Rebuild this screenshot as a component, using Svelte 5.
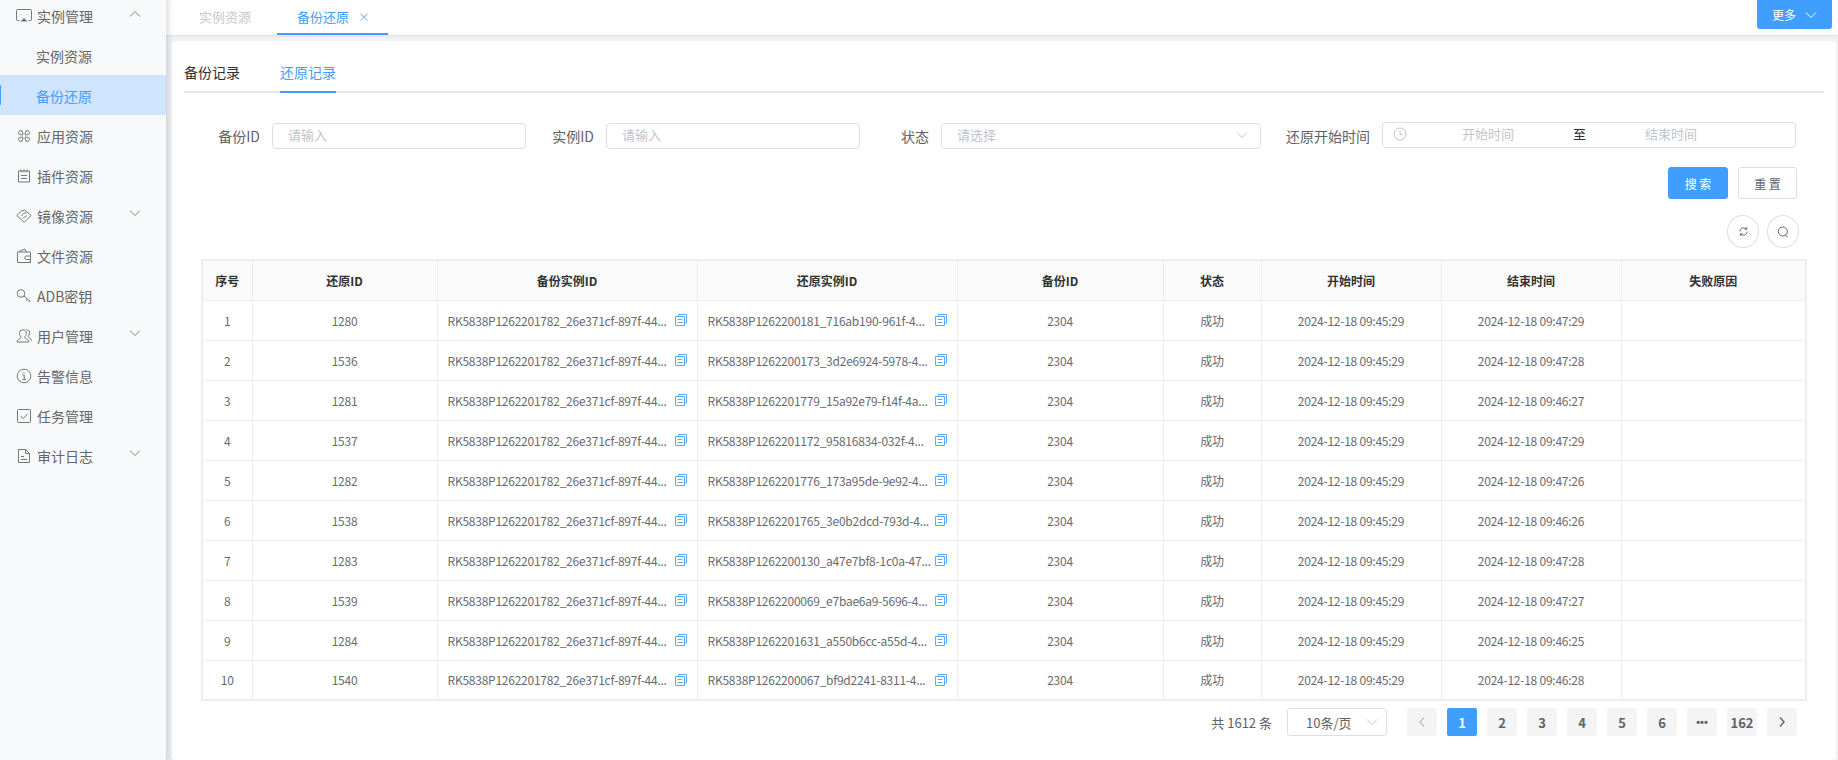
<script lang="ts">
  const menu = [
    { label: '实例管理', icon: 'screen', arrow: 'up' },
    { label: '实例资源', sub: true },
    { label: '备份还原', sub: true, active: true },
    { label: '应用资源', icon: 'apps' },
    { label: '插件资源', icon: 'plugin' },
    { label: '镜像资源', icon: 'tag', arrow: 'down' },
    { label: '文件资源', icon: 'wallet' },
    { label: 'ADB密钥', icon: 'key' },
    { label: '用户管理', icon: 'user', arrow: 'down' },
    { label: '告警信息', icon: 'info' },
    { label: '任务管理', icon: 'check' },
    { label: '审计日志', icon: 'doc', arrow: 'down' }
  ];

  const columns = ['序号', '还原ID', '备份实例ID', '还原实例ID', '备份ID', '状态', '开始时间', '结束时间', '失败原因'];

  const source = 'RK5838P1262201782_26e371cf-897f-44...';
  const rows = [
    ['1280', 'RK5838P1262200181_716ab190-961f-4...', '09:47:29'],
    ['1536', 'RK5838P1262200173_3d2e6924-5978-4...', '09:47:28'],
    ['1281', 'RK5838P1262201779_15a92e79-f14f-4a...', '09:46:27'],
    ['1537', 'RK5838P1262201172_95816834-032f-4...', '09:47:29'],
    ['1282', 'RK5838P1262201776_173a95de-9e92-4...', '09:47:26'],
    ['1538', 'RK5838P1262201765_3e0b2dcd-793d-4...', '09:46:26'],
    ['1283', 'RK5838P1262200130_a47e7bf8-1c0a-47...', '09:47:28'],
    ['1539', 'RK5838P1262200069_e7bae6a9-5696-4...', '09:47:27'],
    ['1284', 'RK5838P1262201631_a550b6cc-a55d-4...', '09:46:25'],
    ['1540', 'RK5838P1262200067_bf9d2241-8311-4...', '09:46:28']
  ];

  const pages = ['1', '2', '3', '4', '5', '6', '•••', '162'];
</script>

{#snippet chevron(dir: string)}
  <svg class="chev" class:up={dir === 'up'} viewBox="0 0 12 8" width="12" height="8" fill="none" stroke="currentColor" stroke-width="1"><path d="M1 1.5l5 5 5-5" /></svg>
{/snippet}

{#snippet menuIcon(name: string)}
  <svg class="micon" viewBox="0 0 16 16" width="16" height="16" fill="none" stroke="currentColor" stroke-width="1">
    {#if name === 'screen'}
      <path d="M3.5 12.500H1.500a1 1 0 0 1-1-1v-9a1 1 0 0 1 1-1h13a1 1 0 0 1 1 1v9a1 1 0 0 1-1 1h-2" />
      <path d="M4.500 13.500l3.500-3.500 3.500 3.500z" fill="currentColor" stroke="none" />
    {:else if name === 'apps'}
      <path d="M6.800 6.800H4.700a2.100 2.100 0 1 1 2.100-2.100zM9.200 6.800V4.700a2.100 2.100 0 1 1 2.100 2.100zM6.800 9.200v2.100a2.100 2.100 0 1 1-2.100-2.100zM9.200 9.200h2.100a2.100 2.100 0 1 1-2.100 2.100z" />
    {:else if name === 'plugin'}
      <path d="M2.500 3h11v11h-11zM5 1.500v3M8 1.500v3M11 1.500v3M5 7.500h6M5 10.500h6" />
    {:else if name === 'tag'}
      <path d="M.8 7.500L5.500 3l3-1 6.700 5.500-7 6.800z" /><path d="M5.500 8c1-2.500 3.500-3.500 5-3M6.500 10c1.500-.5 3-1 4.500-2.500" />
    {:else if name === 'wallet'}
      <path d="M1.500 14.500V5a1.500 1.500 0 0 1 1-1.400L9 1l1.200 3h3.800a.5.500 0 0 1 .5.500v10z" /><path d="M2.500 4h7.700M10.500 8h4v3.500h-4a1.750 1.750 0 0 1 0-3.500z" />
    {:else if name === 'key'}
      <circle cx="5" cy="5.500" r="3.800" /><path d="M8 8l6.500 5.500M11.500 11l-1.500 1.800M13.500 12.600l-1 1.200" />
    {:else if name === 'user'}
      <path d="M6.800 1.800a3.400 3.400 0 0 0-3.400 3.600c0 1.700 1 2.600 1.500 3.400.4 1.500-1 2-2.300 2.700-1 .5-1.600 1.300-1.600 2.500h11.800c0-1.200-.6-2-1.600-2.500-1.300-.7-2.700-1.200-2.300-2.700.5-.8 1.500-1.700 1.500-3.400a3.400 3.400 0 0 0-3.600-3.600z" />
      <path d="M10.300 1.500c2.300.2 3.500 2 3.300 3.900-.2 1.400-1.200 2.200-1.300 3.200 0 1.600 3 1.400 3.200 4" />
    {:else if name === 'info'}
      <circle cx="8" cy="8" r="6.800" /><path d="M6.500 7h1.700v4.500M6.500 11.500h3.500M8 4.200v1.300" />
    {:else if name === 'check'}
      <rect x="1.500" y="1.500" width="13" height="13" rx="1" /><path d="M4.500 8l2.700 2.700 4.300-5" />
    {:else if name === 'doc'}
      <path d="M2.500 1.500h7l4 4v9h-11z" /><path d="M9.500 1.500v4h4M5 8.500h3M5 11.500h6" />
    {/if}
  </svg>
{/snippet}

{#snippet copyIcon()}
  <svg class="copy" viewBox="0 0 12 12" width="12" height="12" fill="none" stroke="currentColor" stroke-width="1"><path d="M3.500 2.500V.5h8v8.500h-2" /><path d="M.5 2.500h9v9h-9z" /><path d="M2.500 5.500h5M2.500 8.500h5" /></svg>
{/snippet}

<div class="layout">
  <aside class="sidebar">
    {#each menu as item}
      <div class="mitem" class:sub={item.sub} class:active={item.active}>
        {#if item.icon}{@render menuIcon(item.icon)}{/if}
        <span>{item.label}</span>
        {#if item.arrow}{@render chevron(item.arrow)}{/if}
      </div>
    {/each}
  </aside>

  <div class="main">
    <header class="topbar">
      <div class="tabs">
        <div class="tab">实例资源</div>
        <div class="tab current">备份还原<span class="close">×</span></div>
      </div>
      <button class="more">更多{@render chevron('down')}</button>
    </header>

    <section class="card">
      <div class="subtabs">
        <div class="subtab">备份记录</div>
        <div class="subtab on">还原记录</div>
      </div>

      <div class="filters">
        <label class="f f1">备份ID<span class="input">请输入</span></label>
        <label class="f f2">实例ID<span class="input">请输入</span></label>
        <label class="f f3">状态<span class="input select">请选择{@render chevron('down')}</span></label>
        <label class="f f4">
          还原开始时间
          <span class="input range">
            <svg viewBox="0 0 14 14" width="14" height="14" fill="none" stroke="currentColor" stroke-width="1"><circle cx="7" cy="7" r="6" /><path d="M7 3.500V7.500h2.500" /></svg>
            <i>开始时间</i><b>至</b><i>结束时间</i>
          </span>
        </label>
      </div>

      <div class="actions">
        <button class="btn primary">搜 索</button>
        <button class="btn">重 置</button>
      </div>

      <div class="tools">
        <button class="round" aria-label="刷新">
          <svg viewBox="0 0 12 12" width="11" height="11" fill="none" stroke="currentColor" stroke-width="1"><path d="M2 6a4 4 0 0 1 7-2.700M10 6a4 4 0 0 1-7 2.700M9.500 1v2.500H7M2.500 11V8.500H5" /></svg>
        </button>
        <button class="round" aria-label="搜索">
          <svg viewBox="0 0 12 12" width="12" height="12" fill="none" stroke="currentColor" stroke-width="1"><circle cx="5.800" cy="5.500" r="4.500" /><path d="M8.500 9l2 2" /></svg>
        </button>
      </div>

      <table>
        <colgroup>
          <col style="width:50px" /><col style="width:185px" /><col style="width:260px" /><col style="width:260px" /><col style="width:206px" /><col style="width:98px" /><col style="width:180px" /><col style="width:180px" /><col style="width:185px" />
        </colgroup>
        <thead>
          <tr>{#each columns as c}<th>{c}</th>{/each}</tr>
        </thead>
        <tbody>
          {#each rows as r, i}
            <tr>
              <td>{i + 1}</td>
              <td>{r[0]}</td>
              <td class="idcell"><div><span>{source}</span>{@render copyIcon()}</div></td>
              <td class="idcell"><div><span>{r[1]}</span>{@render copyIcon()}</div></td>
              <td>2304</td>
              <td>成功</td>
              <td>2024-12-18 09:45:29</td>
              <td>2024-12-18 {r[2]}</td>
              <td></td>
            </tr>
          {/each}
        </tbody>
      </table>

      <div class="pager">
        <span class="total">共 1612 条</span>
        <span class="size">10条/页{@render chevron('down')}</span>
        <div class="pages">
          <span class="pg dim"><svg viewBox="0 0 8 12" width="8" height="12" fill="none" stroke="currentColor" stroke-width="1.400"><path d="M6 1.500L2 6l4 4.500" /></svg></span>
          {#each pages as p}
            <span class="pg" class:cur={p === '1'} class:dots={p === '•••'}>{p}</span>
          {/each}
          <span class="pg"><svg viewBox="0 0 8 12" width="8" height="12" fill="none" stroke="currentColor" stroke-width="1.400"><path d="M2 1.500L6 6l-4 4.500" /></svg></span>
        </div>
      </div>
    </section>
  </div>
</div>

<style>
  :global(body) {
    margin: 0;
    font-family: "Noto Sans CJK SC", "Noto Sans", sans-serif;
    font-size: 14px;
    color: #606266;
  }

  .layout {
    display: flex;
    width: 1838px;
    height: 760px;
    overflow: hidden;
    background: #f0f2f5;
  }

  .sidebar {
    flex: none;
    width: 166px;
    height: 770px;
    margin-top: -5px;
    background: #f8f9fb;
    box-shadow: 2px 0 6px rgb(0 21 41 / 0.16);
    position: relative;
    z-index: 2;
  }

  .mitem {
    position: relative;
    display: flex;
    align-items: center;
    box-sizing: border-box;
    height: 40px;
    padding: 2px 0 0 16px;
    font-size: 14px;
    color: #666;
  }
  .mitem.sub {
    padding-left: 36px;
  }
  .mitem.active {
    background: #cfe5fd;
    color: #409eff;
  }
  .mitem.active::before {
    content: '';
    position: absolute;
    left: -1px;
    top: 10px;
    height: 20px;
    width: 2px;
    border-radius: 2px;
    background: #409eff;
  }
  .micon {
    margin-right: 5px;
    color: #777;
  }
  .mitem .chev {
    position: absolute;
    left: 129px;
    top: 14px;
    color: #888;
  }
  .mitem .chev.up {
    top: 15px;
  }
  .chev.up {
    transform: rotate(180deg);
  }

  .main {
    flex: 1;
    min-width: 0;
  }

  .topbar {
    display: flex;
    justify-content: space-between;
    align-items: flex-start;
    height: 35px;
    background: #fff;
    box-shadow: 0 1px 3px rgb(0 0 0 / 0.08);
    padding: 0 6px 0 0;
  }
  .tabs {
    display: flex;
  }
  .tab {
    display: flex;
    align-items: center;
    box-sizing: border-box;
    width: 111px;
    height: 33px;
    padding-left: 33px;
    font-size: 13px;
    color: #c8c9cc;
  }
  .tab.current {
    padding-left: 20px;
    height: 35px;
    border-bottom: 2px solid #409eff;
    color: #409eff;
  }
  .close {
    margin-left: 9px;
    font-size: 12px;
    color: #7db8f7;
  }
  .more {
    display: flex;
    align-items: center;
    justify-content: center;
    gap: 9px;
    width: 75px;
    height: 29px;
    border: 0;
    border-radius: 0 0 3px 3px;
    background: #409eff;
    color: #fff;
    font: inherit;
    font-size: 12px;
  }

  .card {
    margin: 6px 2px 0 6px;
    height: 719px;
    box-sizing: border-box;
    padding: 0 12px;
    background: #fff;
    border-radius: 4px;
  }

  .subtabs {
    display: flex;
    gap: 40px;
    height: 50px;
    border-bottom: 2px solid #e4e7ed;
  }
  .subtab {
    height: 52px;
    padding-top: 19px;
    box-sizing: border-box;
    line-height: 24px;
    color: #303133;
  }
  .subtab.on {
    color: #409eff;
    border-bottom: 2px solid #409eff;
  }

  .filters {
    display: flex;
    height: 26px;
    margin-top: 30px;
  }
  .f {
    display: flex;
    align-items: center;
    justify-content: flex-end;
    gap: 12px;
    font-size: 14px;
    color: #606266;
    white-space: nowrap;
  }
  .f1 { width: 342px; }
  .f2 { width: 334px; }
  .f3 { width: 401px; }
  .f4 { width: 535px; }
  .input {
    display: flex;
    align-items: center;
    box-sizing: border-box;
    height: 26px;
    padding: 0 0 3px 15px;
    border: 1px solid #dcdfe6;
    border-radius: 4px;
    color: #c0c4cc;
    font-size: 13px;
    background: #fff;
  }
  .f1 .input { width: 254px; }
  .f2 .input { width: 254px; }
  .f3 .input { width: 320px; justify-content: space-between; padding-right: 12px; }
  .f4 .input { width: 414px; padding-left: 10px; margin-top: -2px; }
  .range i {
    width: 162px;
    font-style: normal;
    text-align: center;
  }
  .range b {
    margin: 0 4px;
    font-weight: 400;
    color: #303133;
  }

  .actions {
    display: flex;
    justify-content: flex-end;
    gap: 10px;
    margin-top: 18px;
    padding-right: 27px;
  }
  .btn {
    width: 59px;
    height: 32px;
    border: 1px solid #dcdfe6;
    border-radius: 3px;
    background: #fff;
    color: #606266;
    font: inherit;
    font-size: 12px;
  }
  .btn.primary {
    width: 60px;
    background: #409eff;
    border-color: #409eff;
    color: #fff;
  }

  .tools {
    display: flex;
    justify-content: flex-end;
    gap: 8px;
    margin-top: 16px;
    padding-right: 25px;
  }
  .round {
    display: flex;
    align-items: center;
    justify-content: center;
    width: 32px;
    height: 33px;
    padding: 0;
    border: 1px solid #dcdfe6;
    border-radius: 50%;
    background: #fff;
    color: #606266;
  }

  table {
    width: 1604px;
    margin: 11px 0 0 17px;
    table-layout: fixed;
    border-collapse: collapse;
    border: 2px solid #ebeef5;
    font-size: 12px;
  }
  th,
  td {
    height: 40px;
    padding: 0;
    box-sizing: border-box;
    border: 1px solid #ebeef5;
    text-align: center;
    color: #686a6e;
    font-weight: 400;
  }
  td {
    letter-spacing: -0.24px;
  }
  th {
    background: #fafafa;
    color: #303133;
    font-weight: 700;
  }
  .idcell div {
    display: flex;
    align-items: center;
    justify-content: space-between;
    padding: 0 10px;
    white-space: nowrap;
  }
  .idcell span {
    overflow: hidden;
  }
  .copy {
    flex: none;
    margin-left: 2px;
    color: #5ca8f5;
  }

  .pager {
    display: flex;
    align-items: center;
    justify-content: flex-end;
    height: 28px;
    margin-top: 7px;
    padding-right: 27px;
    font-size: 13px;
  }
  .size {
    display: flex;
    align-items: center;
    justify-content: space-between;
    box-sizing: border-box;
    width: 100px;
    height: 28px;
    margin: 0 20px 0 15px;
    padding: 0 8px 0 18px;
    border: 1px solid #dcdfe6;
    border-radius: 3px;
  }
  .size .chev {
    color: #c0c4cc;
  }
  .pages {
    display: flex;
    gap: 10px;
  }
  .pg {
    display: flex;
    align-items: center;
    justify-content: center;
    width: 30px;
    height: 28px;
    border-radius: 2px;
    background: #f4f4f5;
    color: #606266;
    font-weight: 700;
    font-size: 13px;
  }
  .pg.dots {
    font-family: "Liberation Sans", sans-serif;
    font-size: 11px;
  }
  .pg.cur {
    background: #409eff;
    color: #fff;
  }
  .pg.dim {
    color: #c0c4cc;
  }
</style>
